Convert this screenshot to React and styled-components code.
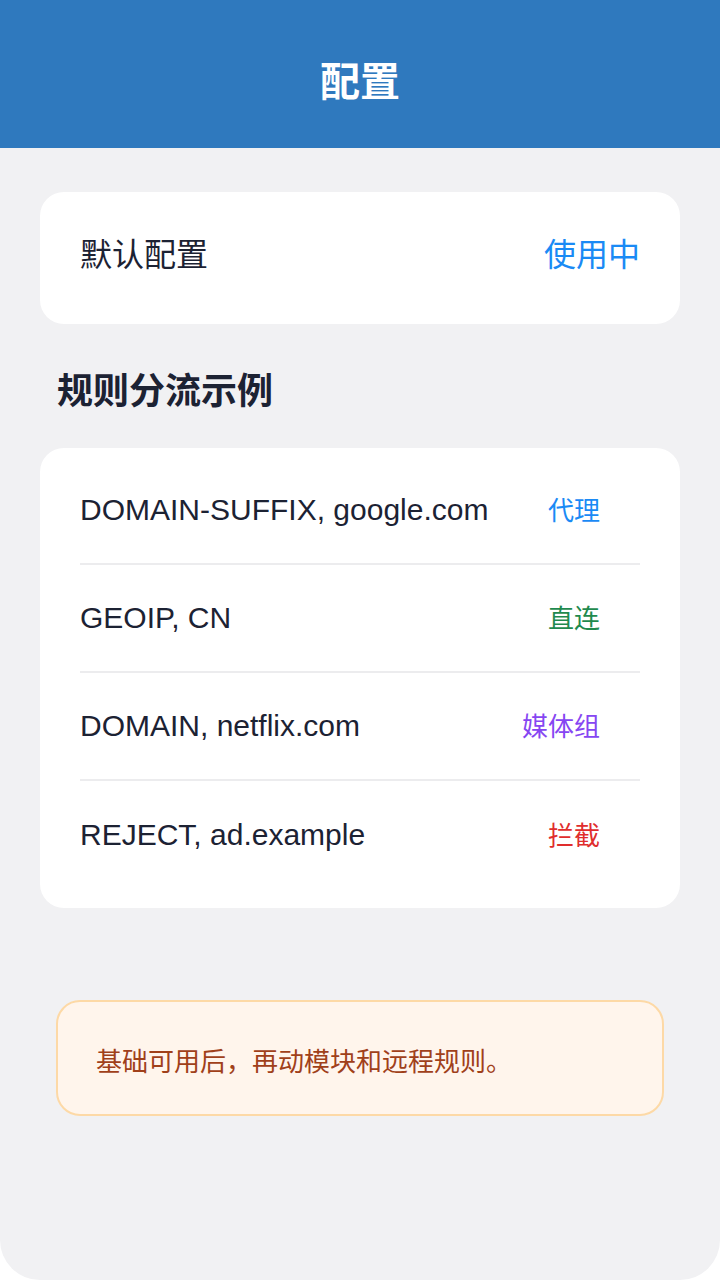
import React from 'react';
import styled, { createGlobalStyle } from 'styled-components';

const GlobalStyle = createGlobalStyle`
  html, body {
    margin: 0;
    padding: 0;
    background: #ffffff;
  }

  body {
    font-family: "Liberation Sans", "Noto Sans CJK SC", sans-serif;
  }
`;

const Screen = styled.div`
  width: 720px;
  height: 1280px;
  background: #f1f1f3;
  border-radius: 0 0 40px 40px;
  overflow: hidden;
  display: flex;
  flex-direction: column;
`;

const Header = styled.header`
  height: 148px;
  background: #2f79be;
  display: flex;
  align-items: center;
  justify-content: center;
  padding-top: 10px;
  box-sizing: border-box;
`;

const Title = styled.h1`
  margin: 0;
  color: #ffffff;
  font-family: "Noto Sans CJK SC", sans-serif;
  font-size: 40px;
  font-weight: 700;
`;

const Content = styled.main`
  display: flex;
  flex-direction: column;
  padding: 44px 40px 0;
`;

const Card = styled.section`
  background: #ffffff;
  border-radius: 24px;
`;

const ProfileCard = styled(Card)`
  height: 132px;
  box-sizing: border-box;
  padding: 0 40px 12px;
  display: flex;
  align-items: center;
  justify-content: space-between;
  font-family: "Noto Sans CJK SC", sans-serif;
  font-size: 32px;
`;

const ProfileName = styled.span`
  color: #1c2233;
`;

const ProfileState = styled.span`
  color: #1a8af5;
`;

const SectionTitle = styled.h2`
  margin: 0;
  height: 124px;
  box-sizing: border-box;
  padding: 4px 0 0 17px;
  display: flex;
  align-items: center;
  color: #1c2233;
  font-family: "Noto Sans CJK SC", sans-serif;
  font-size: 36px;
  font-weight: 700;
`;

const RuleCard = styled(Card)`
  padding: 9px 40px 19px;
`;

const RuleRow = styled.div`
  height: 108px;
  box-sizing: border-box;
  display: flex;
  align-items: center;
  justify-content: space-between;
  padding-right: 40px;
  border-bottom: 2px solid #ececee;

  &:last-child {
    border-bottom: none;
  }
`;

const RuleText = styled.span`
  color: #1c2233;
  font-family: "Liberation Sans", sans-serif;
  font-size: 30px;
`;

const TAG_COLORS = {
  proxy: '#1a8af5',
  direct: '#1f8a4e',
  media: '#8646f2',
  reject: '#e02d2d',
};

const RuleTag = styled.span`
  padding-bottom: 4px;
  color: ${({ kind }) => TAG_COLORS[kind]};
  font-family: "Noto Sans CJK SC", sans-serif;
  font-size: 26px;
`;

const Notice = styled.div`
  margin: 92px 16px 0;
  height: 116px;
  box-sizing: border-box;
  padding: 2px 38px 0;
  display: flex;
  align-items: center;
  background: #fff5ec;
  border: 2px solid #fdd9a6;
  border-radius: 24px;
  color: #a0401a;
  font-family: "Noto Sans CJK SC", sans-serif;
  font-size: 26px;
`;

const rules = [
  { text: 'DOMAIN-SUFFIX, google.com', tag: '代理', kind: 'proxy' },
  { text: 'GEOIP, CN', tag: '直连', kind: 'direct' },
  { text: 'DOMAIN, netflix.com', tag: '媒体组', kind: 'media' },
  { text: 'REJECT, ad.example', tag: '拦截', kind: 'reject' },
];

const App = () => (
  <>
    <GlobalStyle />
    <Screen>
      <Header>
        <Title>配置</Title>
      </Header>
      <Content>
        <ProfileCard>
          <ProfileName>默认配置</ProfileName>
          <ProfileState>使用中</ProfileState>
        </ProfileCard>
        <SectionTitle>规则分流示例</SectionTitle>
        <RuleCard>
          {rules.map((rule) => (
            <RuleRow key={rule.text}>
              <RuleText>{rule.text}</RuleText>
              <RuleTag kind={rule.kind}>{rule.tag}</RuleTag>
            </RuleRow>
          ))}
        </RuleCard>
        <Notice>基础可用后，再动模块和远程规则。</Notice>
      </Content>
    </Screen>
  </>
);

export default App;
